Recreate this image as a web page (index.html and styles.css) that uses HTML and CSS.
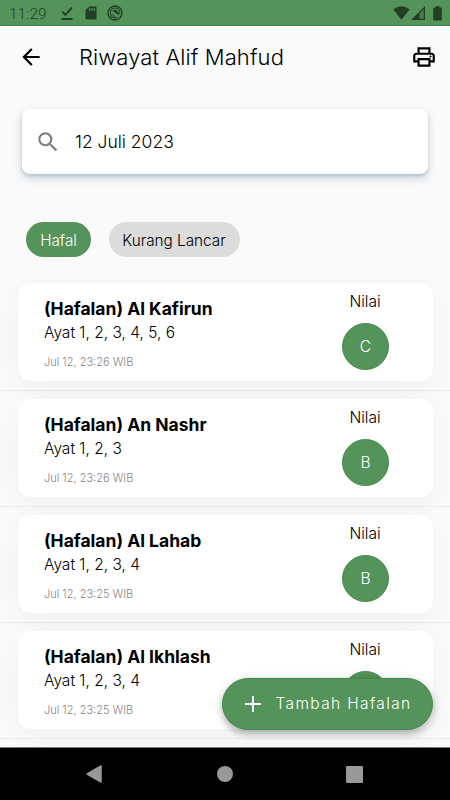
FILE: index.html
```html
<!DOCTYPE html>
<html lang="id">
<head>
<meta charset="utf-8">
<title>Riwayat Hafalan</title>
<link rel="stylesheet" href="styles.css">
</head>
<body>
<div class="screen">
  <div class="status">
    <span class="clock">11:29</span>
    <svg class="s-check" width="12" height="15" viewBox="0 0 12 15"><path d="M1.2 5.6 4.3 8.8 11 1.6" fill="none" stroke="currentColor" stroke-width="1.9"/><path d="M.5 12h11v2H.5z" fill="currentColor"/></svg>
    <svg class="s-sd" width="12" height="14" viewBox="0 0 12 14"><path fill="currentColor" fill-rule="evenodd" d="M4.3.5h6.2q1 0 1 1v11q0 1-1 1h-9q-1 0-1-1V4.300zM4 2.300v2.500h1.300V2.300zM6.300 2.300v2.500h1.300V2.300zM8.600 2.300v2.500h1.300V2.300z"/></svg>
    <svg class="s-app" width="16" height="16" viewBox="0 0 16 16"><circle cx="8" cy="8" r="7" fill="none" stroke="currentColor" stroke-width="1.3"/><path d="M10.500 12.200A4.900 4.900 0 1 1 12.900 8.800" fill="none" stroke="currentColor" stroke-width="1.100"/><path d="M5.300 5.500Q9 3.200 11.800 7.800v2.800zM4.600 8.300 8.600 11.700Q5.800 12 4.600 8.300z" fill="currentColor"/></svg>
    <svg class="s-wifi" width="17" height="14" viewBox="0 0 17 14"><path fill="currentColor" d="M.3 3.500Q8.500-2.800 16.700 3.500L8.500 13.700z"/></svg>
    <svg class="s-cell" width="14" height="14" viewBox="0 0 14 14"><path fill="currentColor" fill-rule="evenodd" d="M0 14 14 0v14zM8.500 7.500v5.300h4.200V3.200z"/><path fill="currentColor" opacity=".25" d="M8.500 7.500v5.300h4.200V3.200z"/></svg>
    <svg class="s-batt" width="9" height="15" viewBox="0 0 9 15"><path fill="currentColor" d="M2.700 0h3.600v1.500H8q.8 0 .8.800v11.400q0 .8-.8.800H1q-.8 0-.8-.8V2.300q0-.8.800-.8h1.700z"/></svg>
  </div>
  <header class="appbar">
    <svg class="back" width="26" height="26" viewBox="0 0 24 24"><path d="M20 11H7.830l5.590-5.590L12 4l-8 8 8 8 1.410-1.410L7.830 13H20z"/></svg>
    <h1>Riwayat Alif Mahfud</h1>
    <svg class="print" width="26" height="26" viewBox="0 0 24 24"><path d="M19 8h-1V3H6v5H5c-1.660 0-3 1.340-3 3v6h4v4h12v-4h4v-6c0-1.660-1.340-3-3-3zM8 5h8v3H8V5zm8 12v2H8v-4h8v2zm2-2v-2H6v2H4v-4c0-.550.450-1 1-1h14c.550 0 1 .450 1 1v4h-2z"/><circle cx="18" cy="11.500" r="1"/></svg>
  </header>
  <div class="search">
    <svg width="26" height="26" viewBox="0 0 24 24"><path fill="#808080" d="M15.500 14h-.79l-.28-.27A6.470 6.470 0 0 0 16 9.500 6.500 6.500 0 1 0 9.500 16c1.610 0 3.090-.59 4.230-1.570l.27.28v.79l5 4.990L20.490 19l-4.990-5zm-6 0C7.010 14 5 11.990 5 9.500S7.010 5 9.500 5 14 7.010 14 9.500 11.990 14 9.500 14z"/></svg>
    <span>12 Juli 2023</span>
  </div>
  <div class="chips"><span class="chip on">Hafal</span><span class="chip off">Kurang Lancar</span></div>
  <main class="list">
    <div class="row"><article class="card"><div class="info"><h2>(Hafalan) Al Kafirun</h2><p>Ayat 1, 2, 3, 4, 5, 6</p><time>Jul 12, 23:26 WIB</time></div><div class="score"><span>Nilai</span><b>C</b></div></article></div>
    <div class="row"><article class="card"><div class="info"><h2>(Hafalan) An Nashr</h2><p>Ayat 1, 2, 3</p><time>Jul 12, 23:26 WIB</time></div><div class="score"><span>Nilai</span><b>B</b></div></article></div>
    <div class="row"><article class="card"><div class="info"><h2>(Hafalan) Al Lahab</h2><p>Ayat 1, 2, 3, 4</p><time>Jul 12, 23:25 WIB</time></div><div class="score"><span>Nilai</span><b>B</b></div></article></div>
    <div class="row"><article class="card"><div class="info"><h2>(Hafalan) Al Ikhlash</h2><p>Ayat 1, 2, 3, 4</p><time>Jul 12, 23:25 WIB</time></div><div class="score"><span>Nilai</span><b></b></div></article></div>
    <div class="row"></div>
  </main>
  <button class="fab"><svg width="16" height="16" viewBox="0 0 16 16"><path d="M8 0v16M0 8h16" stroke="#fff" stroke-width="2"/></svg><span>Tambah Hafalan</span></button>
  <nav class="nav">
    <svg width="16" height="18" viewBox="0 0 16 18"><path d="M15 1v16L1.200 9z" stroke="#999" stroke-width="1.500" stroke-linejoin="round"/></svg>
    <svg width="16" height="16" viewBox="0 0 16 16"><circle cx="8" cy="8" r="8"/></svg>
    <svg width="17" height="17" viewBox="0 0 17 17"><rect width="17" height="17" rx="1.300"/></svg>
  </nav>
</div>
</body>
</html>
```

FILE: styles.css
```css
* { box-sizing: border-box; }
body { margin: 0; font-family: Inter, sans-serif; font-weight: 300; color: #000; }
h1, h2, p { margin: 0; }
svg { display: block; flex: none; }
.screen { position: relative; width: 450px; height: 800px; overflow: hidden; background: #fafafa; display: flex; flex-direction: column; }
.status { height: 26px; flex: none; background: #54935a; border-bottom: 1px solid #3f8546; color: #213f25; display: flex; align-items: center; padding: 1px 8px 0 9px; }
.clock { font-family: Roboto, sans-serif; font-weight: 300; font-size: 15.5px; width: 52px; padding-top: 1px; }
.s-sd { margin-left: 12px; }
.s-app { margin-left: 10px; }
.s-wifi { margin-left: auto; }
.s-cell { margin-left: 1px; }
.s-batt { margin-left: 8px; }
.appbar { height: 62px; flex: none; display: flex; align-items: center; padding: 0 13px 0 18px; }
h1 { font-size: 22px; line-height: 28px; font-weight: 300; letter-spacing: .1px; margin-left: 35px; white-space: nowrap; }
.print { margin-left: auto; }
.search { flex: none; height: 65px; margin: 21px 22px 0; padding-left: 13px; display: flex; align-items: center; gap: 14px; border-radius: 8px; background: #fff; font-size: 17.500px; box-shadow: 0 4px 8px rgba(90, 120, 150, .32), 0 2px 3px rgba(90, 120, 150, .22); }
.chips { flex: none; display: flex; gap: 17.500px; height: 35px; margin: 48px 0 0 26px; }
.chip { border-radius: 18px; display: flex; align-items: center; justify-content: center; font-size: 15.300px; padding-top: 1px; }
.on { width: 65px; background: #54935a; color: #fff; }
.off { width: 131px; background: #dcdcdc; }
.list { flex: none; height: 491px; overflow: hidden; padding-top: 17px; }
.row { height: 116px; padding: 9px 17px 0 18px; }
.row + .row { padding-top: 8px; border-top: 1px solid #ebebeb; }
.card { height: 98px; border-radius: 13px; background: #fff; display: flex; justify-content: space-between; padding: 0 44px 0 26px; box-shadow: 0 9px 30px rgba(0, 0, 0, .04); }
.info { padding-top: 14px; white-space: nowrap; }
h2 { font-size: 17.500px; line-height: 24px; font-weight: 700; }
.info p { font-size: 15.500px; line-height: 23px; }
time { display: block; font-size: 11px; line-height: 14px; margin-top: 11px; color: #858585; }
.score { width: 47px; display: flex; flex-direction: column; align-items: center; padding-top: 8px; font-size: 15.500px; line-height: 22px; }
.score span { position: relative; left: -.5px; }
.score b { width: 47px; height: 47px; margin-top: 9.500px; border-radius: 50%; background: #54935a; border: 1px solid #3f8b48; color: #fff; font-weight: 300; display: flex; align-items: center; justify-content: center; padding-top: 2px; }
.fab { position: absolute; left: 221.500px; top: 677.500px; width: 211px; height: 52.500px; border: 1px solid #43894a; border-radius: 27px; background: #54935a; color: #fff; font: 300 15.500px Inter, sans-serif; letter-spacing: 1.350px; padding: 0 0 0 22px; display: flex; align-items: center; gap: 15px; white-space: nowrap; box-shadow: 0 4px 7px rgba(0, 0, 0, .24), 0 1px 12px rgba(0, 0, 0, .1); }
.nav { position: absolute; left: 0; right: 0; bottom: 0; height: 53px; background: #000; border-top: 1px solid #777; display: flex; align-items: center; justify-content: space-between; padding: 0 87px 0 86px; }
.nav svg { fill: #999; }
.nav svg:nth-child(2) { margin-left: 1px; }
```
